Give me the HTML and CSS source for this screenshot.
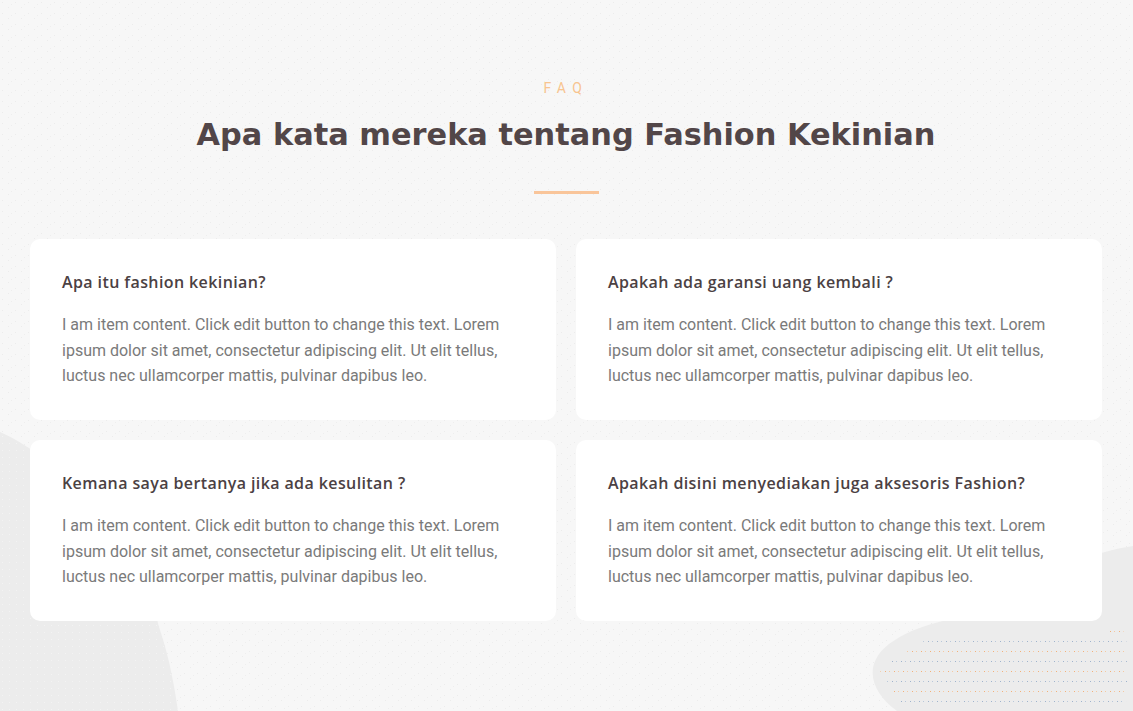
FILE: index.html
```html
<!DOCTYPE html>
<html lang="id">
<head>
<meta charset="utf-8">
<title>FAQ</title>
<link rel="stylesheet" href="styles.css">
</head>
<body>
<section class="faq">
  <svg class="bg" width="1133" height="711" viewBox="0 0 1133 711" aria-hidden="true">
    <defs>
      <pattern id="dots" width="13" height="11" patternUnits="userSpaceOnUse">
        <rect x="2" y="2" width="1" height="1" fill="#ececec"/>
        <rect x="8" y="7" width="1" height="1" fill="#ececec"/>
        <rect x="11" y="4" width="1" height="1" fill="#eeeeee"/>
      </pattern>
      <pattern id="dots2" width="7" height="7" patternUnits="userSpaceOnUse">
        <rect x="2" y="2" width="1" height="1" fill="#f3f3f3"/>
      </pattern>
      <pattern id="cdots" width="9" height="20" patternUnits="userSpaceOnUse">
        <rect x="1" y="1" width="1" height="1" fill="#9fb3cc"/>
        <rect x="5" y="1" width="1" height="1" fill="#b9c8da"/>
        <rect x="3" y="11" width="1" height="1" fill="#f2b07a"/>
        <rect x="7" y="11" width="1" height="1" fill="#f5c9a3"/>
      </pattern>
    </defs>
    <rect width="1133" height="711" fill="url(#dots)"/>
    <path d="M0 432 C30 445 60 470 120 520 C160 560 150 600 160 630 C170 660 175 690 178 711 L0 711 Z" fill="#ececec"/>
    <path d="M1133 546 C1090 552 1040 575 1000 600 C960 622 925 620 895 640 C862 660 868 690 897 711 L1133 711 Z" fill="#ececec"/>
    <path d="M0 432 C30 445 60 470 120 520 C160 560 150 600 160 630 C170 660 175 690 178 711 L0 711 Z" fill="url(#dots2)"/>
    <path d="M927 639 L1100 639 L1112 629 L1126 632 L1128 700 L1110 711 L905 711 L878 668 Z" fill="url(#cdots)"/>
  </svg>
  <header class="faq-head">
    <p class="eyebrow">FAQ</p>
    <h1 class="title">Apa kata mereka tentang Fashion Kekinian</h1>
    <span class="divider"></span>
  </header>
  <div class="grid">
    <article class="card">
      <h2 class="q">Apa itu fashion kekinian?</h2>
      <p class="a">I am item content. Click edit button to change this text. Lorem ipsum dolor sit amet, consectetur adipiscing elit. Ut elit tellus, luctus nec ullamcorper mattis, pulvinar dapibus leo.</p>
    </article>
    <article class="card">
      <h2 class="q">Apakah ada garansi uang kembali ?</h2>
      <p class="a">I am item content. Click edit button to change this text. Lorem ipsum dolor sit amet, consectetur adipiscing elit. Ut elit tellus, luctus nec ullamcorper mattis, pulvinar dapibus leo.</p>
    </article>
    <article class="card">
      <h2 class="q">Kemana saya bertanya jika ada kesulitan ?</h2>
      <p class="a">I am item content. Click edit button to change this text. Lorem ipsum dolor sit amet, consectetur adipiscing elit. Ut elit tellus, luctus nec ullamcorper mattis, pulvinar dapibus leo.</p>
    </article>
    <article class="card">
      <h2 class="q">Apakah disini menyediakan juga aksesoris Fashion?</h2>
      <p class="a">I am item content. Click edit button to change this text. Lorem ipsum dolor sit amet, consectetur adipiscing elit. Ut elit tellus, luctus nec ullamcorper mattis, pulvinar dapibus leo.</p>
    </article>
  </div>
</section>
</body>
</html>
```

FILE: styles.css
```css
* { box-sizing: border-box; }
html, body { margin: 0; padding: 0; }
body {
  background: #f7f7f7;
  font-family: Roboto, "Liberation Sans", sans-serif;
  overflow: hidden;
}
.faq {
  position: relative;
  width: 1133px;
  height: 711px;
  padding: 78px 31px 0 30px;
}
.bg {
  position: absolute;
  left: 0;
  top: 0;
  z-index: 0;
}
.faq-head {
  position: relative;
  z-index: 1;
  display: flex;
  flex-direction: column;
  align-items: center;
}
.eyebrow {
  margin: 0;
  font-family: Roboto, sans-serif;
  font-size: 14px;
  line-height: 20px;
  letter-spacing: 6.5px;
  color: #f8c48f;
}
.title {
  margin: 17px 0 0;
  font-family: "DejaVu Sans", sans-serif;
  font-weight: 700;
  font-size: 30.4px;
  line-height: 40px;
  color: #524648;
  letter-spacing: 0;
}
.divider {
  display: block;
  width: 65px;
  height: 3px;
  margin-top: 36px;
  background: #f9c59a;
}
.grid {
  position: relative;
  z-index: 1;
  display: grid;
  grid-template-columns: 1fr 1fr;
  gap: 20px;
  margin-top: 45px;
}
.card {
  background: #fff;
  border-radius: 10px;
  padding: 33px 32px 32px;
  height: 181px;
}
.q {
  margin: 0;
  font-family: "Open Sans", sans-serif;
  font-weight: 600;
  font-size: 16px;
  line-height: 20px;
  letter-spacing: 0.4px;
  color: #4b4143;
}
.a {
  margin: 20px 0 0;
  font-family: Roboto, sans-serif;
  font-size: 16px;
  line-height: 25.6px;
  color: #7a7a7a;
}
```
